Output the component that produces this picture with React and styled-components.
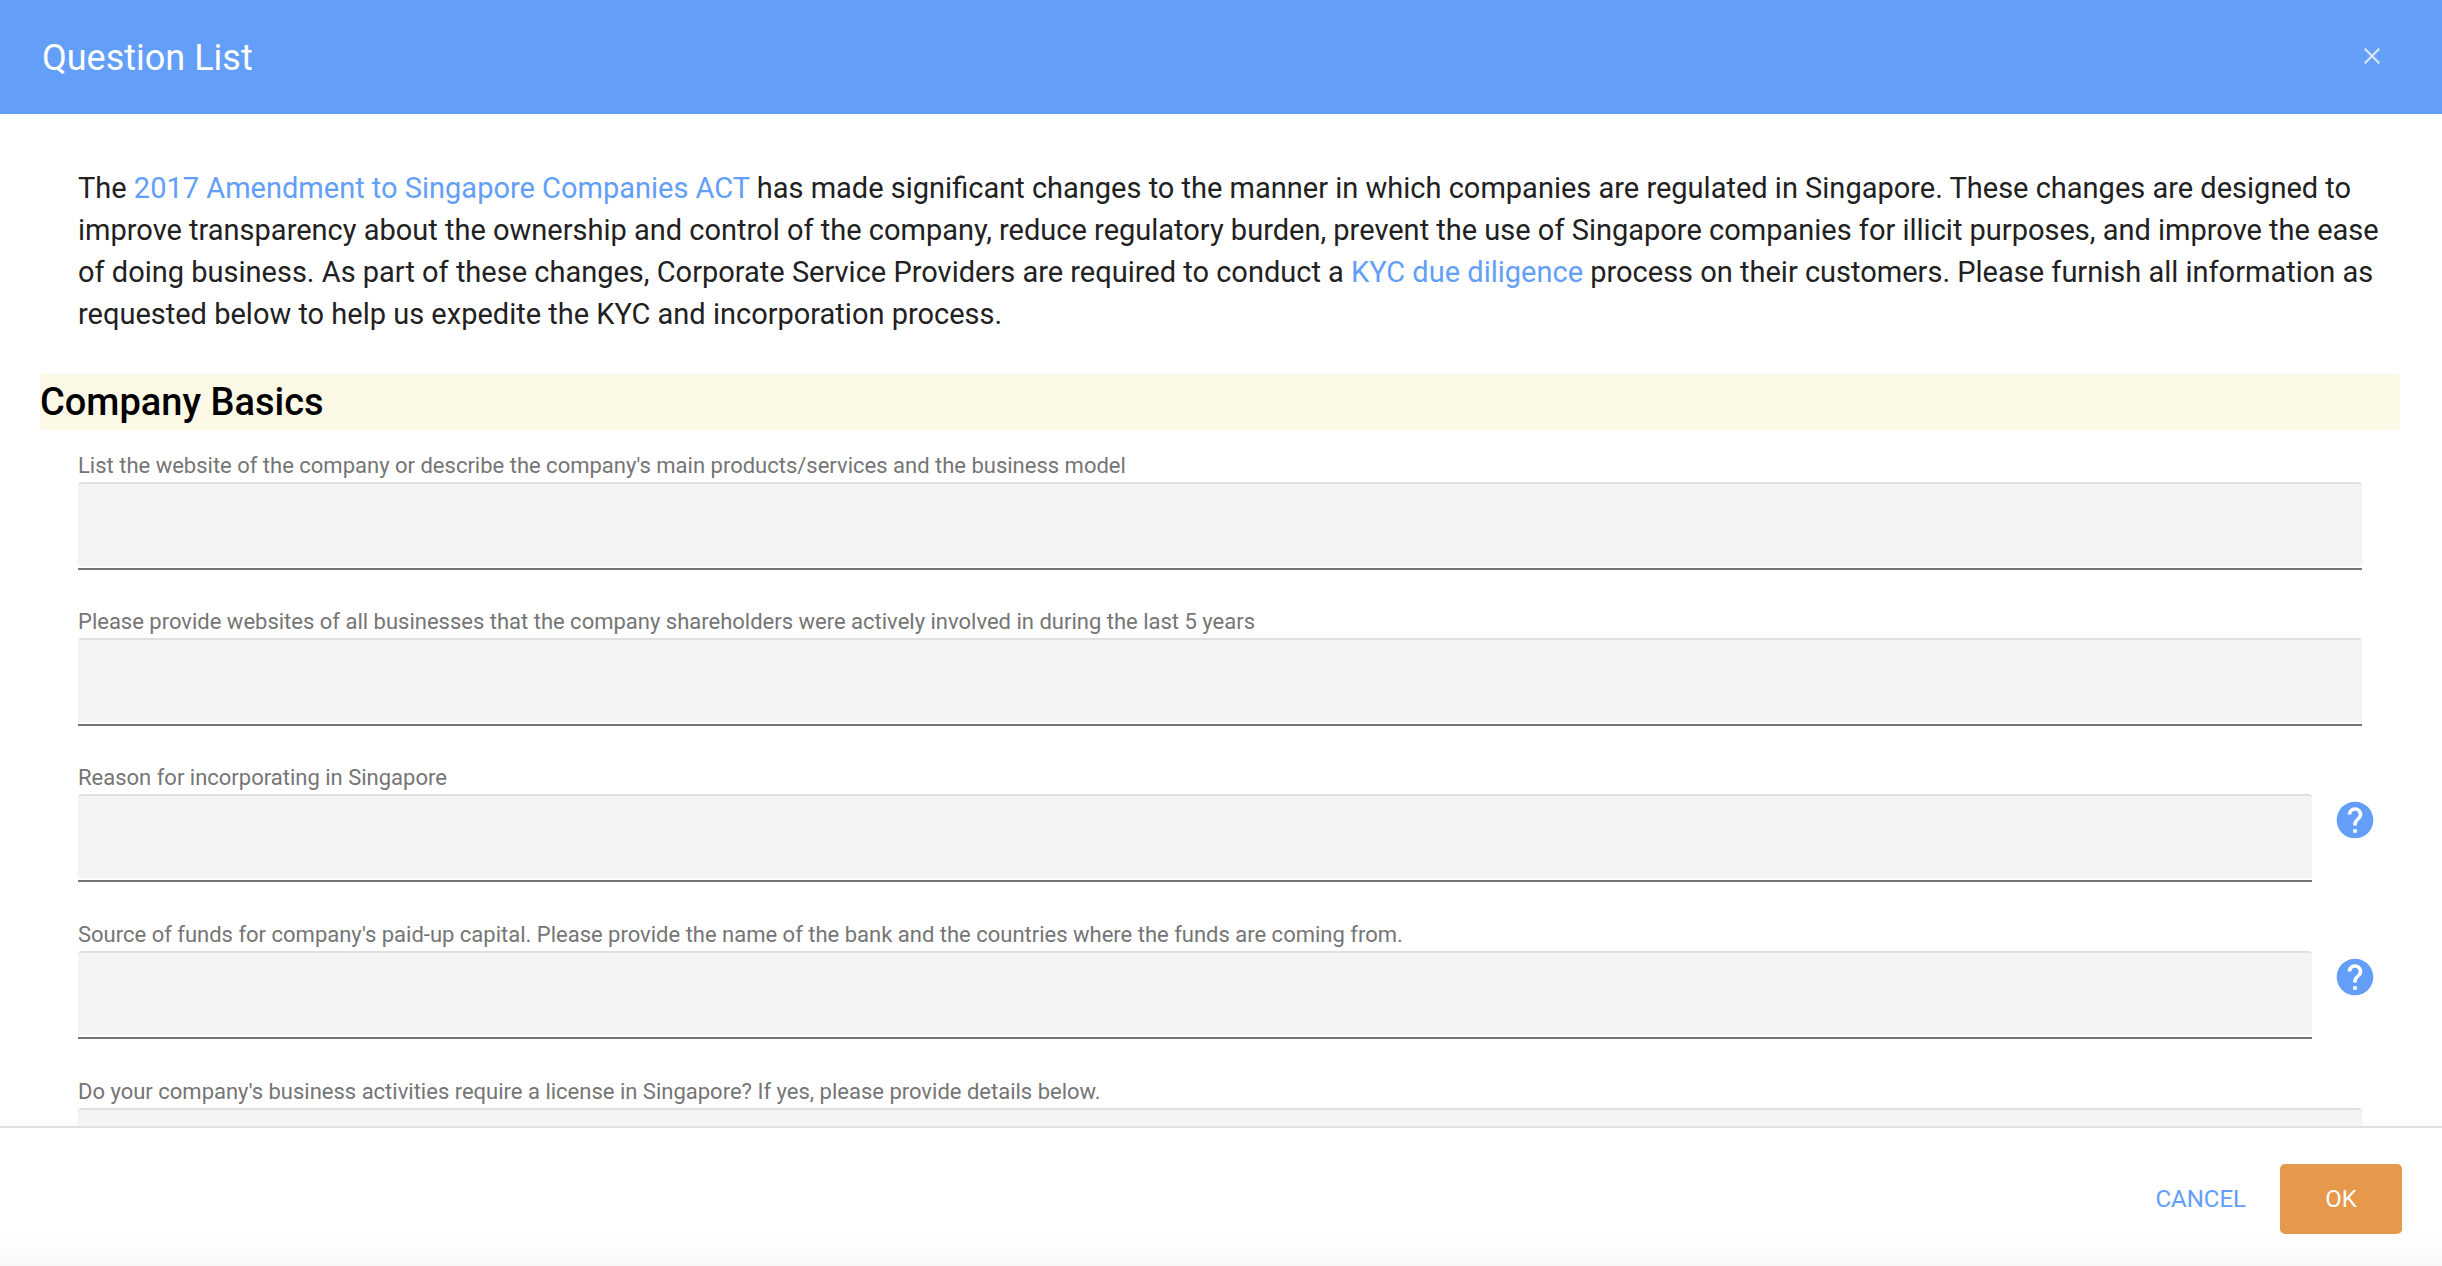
import { useState } from "react";
import styled, { createGlobalStyle } from "styled-components";
import { MdHelp } from "react-icons/md";

const questions = [
    {
        id: "website",
        label: "List the website of the company or describe the company's main products/services and the business model"
    },
    {
        id: "shareholders",
        label: "Please provide websites of all businesses that the company shareholders were actively involved in during the last 5 years"
    },
    { id: "reason", label: "Reason for incorporating in Singapore", help: true },
    {
        id: "funds",
        label: "Source of funds for company's paid-up capital. Please provide the name of the bank and the countries where the funds are coming from.",
        help: true
    },
    {
        id: "license",
        label: "Do your company's business activities require a license in Singapore? If yes, please provide details below."
    }
];

const App = () => {
    const [answers, setAnswers] = useState({});

    const handleChange = (e) => {
        setAnswers({ ...answers, [e.target.name]: e.target.value });
    };

    return (
        <>
            <GlobalStyle />
            <Dialog>
                <Header>
                    <Title>Question List</Title>
                    <CloseButton type="button" aria-label="Close">
                        <svg width="16" height="16" viewBox="0 0 16 16" fill="none" stroke="currentColor" strokeWidth="2.2">
                            <path d="M0.7 0.7l14.6 14.6M15.3 0.7L0.7 15.3" />
                        </svg>
                    </CloseButton>
                </Header>

                <Content>
                    <Intro>
                        The <Link href="#act">2017 Amendment to Singapore Companies ACT</Link> has made significant
                        changes to the manner in which companies are regulated in Singapore. These changes are designed
                        to improve transparency about the ownership and control of the company, reduce regulatory
                        burden, prevent the use of Singapore companies for illicit purposes, and improve the ease of
                        doing business. As part of these changes, Corporate Service Providers are required to conduct
                        a <Link href="#kyc">KYC due diligence</Link> process on their customers. Please furnish all
                        information as requested below to help us expedite the KYC and incorporation process.
                    </Intro>

                    <SectionTitle>Company Basics</SectionTitle>

                    <Questions>
                        {questions.map((q) => (
                            <Field key={q.id} $help={q.help}>
                                <Label htmlFor={q.id}>{q.label}</Label>
                                <FieldRow $help={q.help}>
                                    <Control>
                                        <Input
                                            id={q.id}
                                            name={q.id}
                                            value={answers[q.id] || ""}
                                            onChange={handleChange}
                                        />
                                    </Control>
                                    {q.help && (
                                        <HelpButton type="button" aria-label="Help">
                                            <MdHelp />
                                        </HelpButton>
                                    )}
                                </FieldRow>
                            </Field>
                        ))}
                    </Questions>
                </Content>

                <Footer>
                    <ActionButton type="button">CANCEL</ActionButton>
                    <ActionButton type="button" $primary>OK</ActionButton>
                </Footer>
            </Dialog>
        </>
    );
};

const GlobalStyle = createGlobalStyle`
    * {
        box-sizing: border-box;
    }

    body {
        margin: 0;
        background: #fff;
        font-family: Roboto, "Liberation Sans", sans-serif;
    }
`;

const Dialog = styled.div`
    display: flex;
    flex-direction: column;
    height: 100vh;
`;

const Header = styled.header`
    display: flex;
    flex-shrink: 0;
    justify-content: space-between;
    align-items: flex-start;
    padding: 37px 42px 35px;
    background: #639ef9;
    color: #fff;
`;

const Title = styled.h1`
    margin: 0;
    font-size: 36px;
    font-weight: 400;
    line-height: 42px;
`;

const CloseButton = styled.button`
    display: flex;
    align-items: center;
    justify-content: center;
    width: 56px;
    height: 38px;
    padding: 0;
    border: none;
    background: none;
    color: #d8e6fd;
    cursor: pointer;
`;

const Content = styled.main`
    flex: 1;
    min-height: 0;
    padding: 53px 42px 0 40px;
    overflow-y: auto;
    scrollbar-width: none;
`;

const Intro = styled.p`
    margin: 0 20px 39px 38px;
    color: #212121;
    font-size: 29px;
    line-height: 42px;
`;

const Link = styled.a`
    color: #639ef9;
    text-decoration: none;
`;

const SectionTitle = styled.h2`
    margin: 0;
    border-radius: 4px;
    background: #fdf9e7;
    color: #000;
    font-size: 38px;
    font-weight: 500;
    line-height: 56px;
`;

const Questions = styled.form`
    padding: 20px 23px 0 38px;
`;

const Field = styled.div`
    margin-bottom: ${(props) => (props.$help ? "37px" : "36px")};
`;

const Label = styled.label`
    display: block;
    color: #757575;
    font-size: 22px;
    line-height: 32px;
`;

const FieldRow = styled.div`
    display: flex;
    gap: 21px;
    padding-right: ${(props) => (props.$help ? "0" : "15px")};
`;

const Control = styled.div`
    flex: 1;
    padding-bottom: 2px;
    border-bottom: 2px solid #757575;
`;

const Input = styled.input`
    display: block;
    width: 100%;
    height: 84px;
    padding: 0 16px;
    border: none;
    border-top: 2px solid #e0e0e0;
    border-radius: 4px 4px 0 0;
    background: #f4f4f4;
    color: #212121;
    font: inherit;
    font-size: 29px;
    outline: none;
`;

const HelpButton = styled.button`
    display: flex;
    align-self: flex-start;
    margin-top: 4px;
    padding: 0;
    border: none;
    background: none;
    color: #639ef9;
    font-size: 44px;
    cursor: pointer;
`;

const Footer = styled.footer`
    display: flex;
    flex-shrink: 0;
    justify-content: flex-end;
    padding: 36px 40px 32px;
    border-top: 2px solid #e0e0e0;
    background: linear-gradient(to top, #f8f8f8, #fff 32px);
`;

const ActionButton = styled.button`
    min-width: 122px;
    height: 70px;
    padding: 0 34px;
    border: none;
    border-radius: 5px;
    background: ${(props) => (props.$primary ? "#e6984b" : "transparent")};
    color: ${(props) => (props.$primary ? "#fff" : "#639ef9")};
    font-family: inherit;
    font-size: 24px;
    cursor: pointer;
`;

export default App;
